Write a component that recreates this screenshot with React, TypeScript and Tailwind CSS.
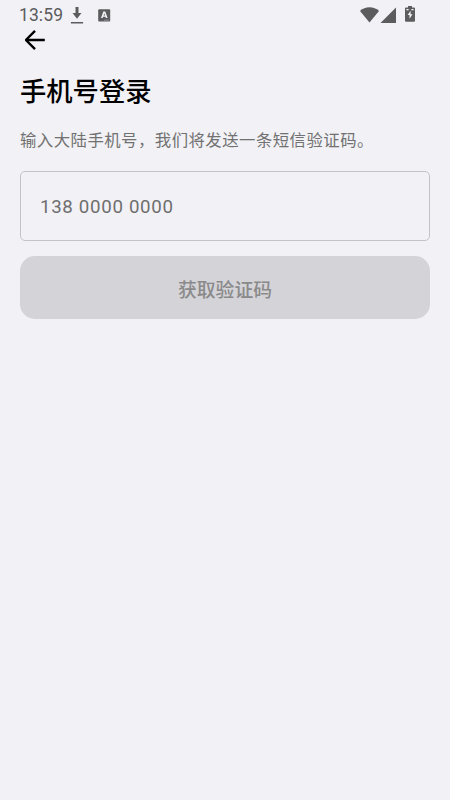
import { useState } from "react"

function StatusBar() {
    return (
        <div className="h-[30px] flex items-center justify-between pl-[19px] pr-[35px] text-[#5c5c5e]">
            <div className="flex items-center">
                <span className="w-[51px] text-[17.5px] leading-[30px] tracking-[0.1px]">13:59</span>
                <svg className="w-[14px] h-[18px]" viewBox="0 0 14 18" fill="currentColor">
                    <path d="M5.5 1h3v6h3L7 12.7 2.500 7h3zM.9 16h12.200v1.500H.9z" />
                </svg>
                <svg className="ml-[14px] w-[13px] h-[13px]" viewBox="0 0 13 13">
                    <rect x="0.2" y="0.2" width="12" height="12.300" rx="1" fill="currentColor" />
                    <path d="M5.300 2.500h2l2.300 6.500H7.900l-.4-1.200H5.100L4.700 9H3zM5.600 6.500H7L6.300 4.300z" fill="#f2f1f6" fillRule="evenodd" />
                    <path d="M6 11.200h5" stroke="#a5a4a9" strokeWidth="0.700" />
                </svg>
            </div>
            <div className="flex items-center pb-px">
                <svg className="w-[19px] h-[16px]" viewBox="0 0 19 16" fill="currentColor">
                    <path d="M9.500 15.600 0 3.900C2.600 1.500 5.900.2 9.500.2s6.900 1.300 9.500 3.700z" />
                </svg>
                <svg className="ml-[1px] w-[16px] h-[16px]" viewBox="0 0 16 16" fill="currentColor">
                    <path d="M.5 16 16 .5V16z" />
                </svg>
                <svg className="ml-[9px] mb-px w-[10px] h-[16px]" viewBox="0 0 10 16">
                    <path d="M3 0h4v1.400h2q1 0 1 1V14.800q0 1-1 1H1q-1 0-1-1V2.400q0-1 1-1h2z" fill="currentColor" />
                    <path d="M5.600 4.800 2.600 9.100h1.900v3.700L7.500 8.300H5.600z" fill="#f2f1f6" />
                    <path d="M1.400 3.600h2.200M6.400 3.600h2.200" stroke="#f2f1f6" strokeWidth="1.200" />
                </svg>
            </div>
        </div>
    )
}

export default function App() {
    const [phone, setPhone] = useState("")

    return (
        <div className="min-h-screen bg-[#f2f1f6] font-[Roboto,'Noto_Sans_CJK_SC',sans-serif]">
            <StatusBar />
            <main className="px-5 flex flex-col">
                <button className="w-[30px] h-5 flex items-center justify-center" aria-label="返回">
                    <svg className="w-[20px] h-[20px]" viewBox="0 0 20 20" fill="none" stroke="#000" strokeWidth="2.400">
                        <path d="M19.800 10H1.800M10 .9.900 10 10 19.100" />
                    </svg>
                </button>
                <h1 className="mt-[23px] h-[38px] text-[26.300px] leading-[38px] font-medium text-black whitespace-nowrap">
                    手机号登录
                </h1>
                <p className="mt-[18px] h-6 text-[16.400px] leading-6 tracking-[0.460px] text-[#717171] whitespace-nowrap">
                    输入大陆手机号，我们将发送一条短信验证码。
                </p>
                <input
                    type="tel"
                    value={phone}
                    onChange={(e) => setPhone(e.target.value)}
                    placeholder="138 0000 0000"
                    className="mt-[18px] w-full h-[70px] rounded-[5px] border border-[#c4c3c8] bg-transparent px-[19px] pt-px text-[18.700px] tracking-[0.680px] text-black placeholder:text-[#6e6e6e] outline-none"
                />
                <button
                    disabled={!phone}
                    className="mt-[15px] w-full h-[63px] rounded-[15px] bg-[#d4d3d8] pt-[7px] text-[18.800px] leading-[56px] font-medium text-[#8a8a8a]"
                >
                    获取验证码
                </button>
            </main>
        </div>
    )
}
